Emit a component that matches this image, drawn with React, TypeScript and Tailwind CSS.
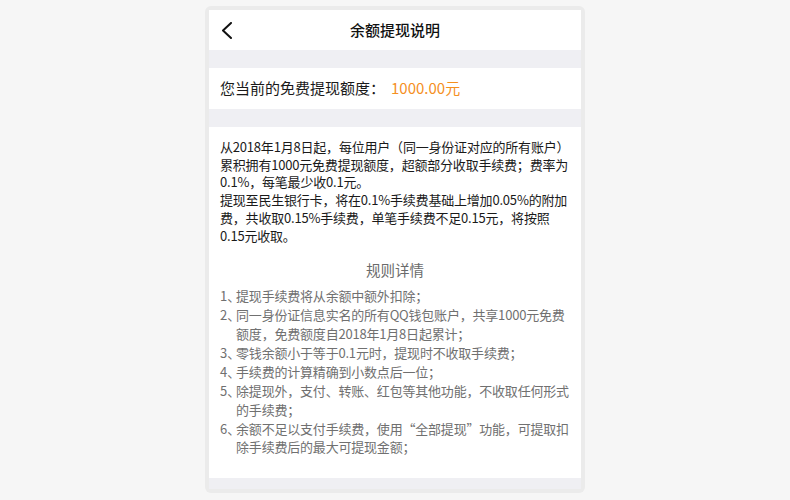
import React from "react";

const intro = [
  "从2018年1月8日起，每位用户（同一身份证对应的所有账户）",
  "累积拥有1000元免费提现额度，超额部分收取手续费；费率为",
  "0.1%，每笔最少收0.1元。",
  "提现至民生银行卡，将在0.1%手续费基础上增加0.05%的附加",
  "费，共收取0.15%手续费，单笔手续费不足0.15元，将按照",
  "0.15元收取。",
];

const rules: string[][] = [
  ["提现手续费将从余额中额外扣除；"],
  ["同一身份证信息实名的所有QQ钱包账户，共享1000元免费", "额度，免费额度自2018年1月8日起累计；"],
  ["零钱余额小于等于0.1元时，提现时不收取手续费；"],
  ["手续费的计算精确到小数点后一位；"],
  ["除提现外，支付、转账、红包等其他功能，不收取任何形式", "的手续费；"],
  ["余额不足以支付手续费，使用“全部提现”功能，可提取扣", "除手续费后的最大可提现金额；"],
];

const BackIcon = () => (
  <svg width="12" height="17" viewBox="0 0 12 17" fill="none">
    <polyline
      points="10,1 2,8.5 10,16"
      stroke="#111111"
      strokeWidth="2"
      strokeLinecap="round"
      strokeLinejoin="round"
    />
  </svg>
);

export default function App() {
  return (
    <div
      className="min-h-screen bg-[#f6f6f6] flex justify-center pt-[6px]"
      style={{ fontFamily: '"Noto Sans CJK SC", "Noto Sans", sans-serif' }}
    >
      <div className="w-[380px] h-[487px] rounded-[6px] bg-[#ebebeb] p-[4px]">
        <div className="h-[479px] bg-[#efeff3] flex flex-col">
          {/* nav bar */}
          <div className="h-[40px] bg-white flex items-center relative shrink-0">
            <button type="button" className="absolute left-[12px] top-[12px] flex">
              <BackIcon />
            </button>
            <div className="flex-1 text-center text-[15px] font-medium text-[#111111]">
              余额提现说明
            </div>
          </div>

          {/* free quota */}
          <div className="mt-[18px] h-[41px] bg-white flex items-center px-[11px] text-[15px] text-[#1a1a1a] shrink-0">
            <span>您当前的免费提现额度：</span>
            <span className="ml-[6px] text-[#f5901f]">1000.00元</span>
          </div>

          {/* description */}
          <div className="mt-[18px] h-[351px] bg-white px-[11px] pt-[11px] shrink-0">
            <div className="text-[13px] tracking-[-0.2px] leading-[17.7px] text-[#1a1a1a]">
              {intro.map((line) => (
                <div key={line} className="whitespace-nowrap">
                  {line}
                </div>
              ))}
            </div>

            <div className="mt-[16px] text-center text-[14.5px] leading-[20px] text-[#6b6b6b]">
              规则详情
            </div>

            <div className="mt-[7px] text-[13px] leading-[18.9px] text-[#707070]">
              {rules.map((lines, i) => (
                <div key={i} className="flex">
                  <span className="shrink-0 whitespace-nowrap">
                    {i + 1}
                    <span className="tracking-[-4.2px]">、</span>
                  </span>
                  <div className="tracking-[-0.2px]">
                    {lines.map((l) => (
                      <div key={l} className="whitespace-nowrap">
                        {l}
                      </div>
                    ))}
                  </div>
                </div>
              ))}
            </div>
          </div>
        </div>
      </div>
    </div>
  );
}
